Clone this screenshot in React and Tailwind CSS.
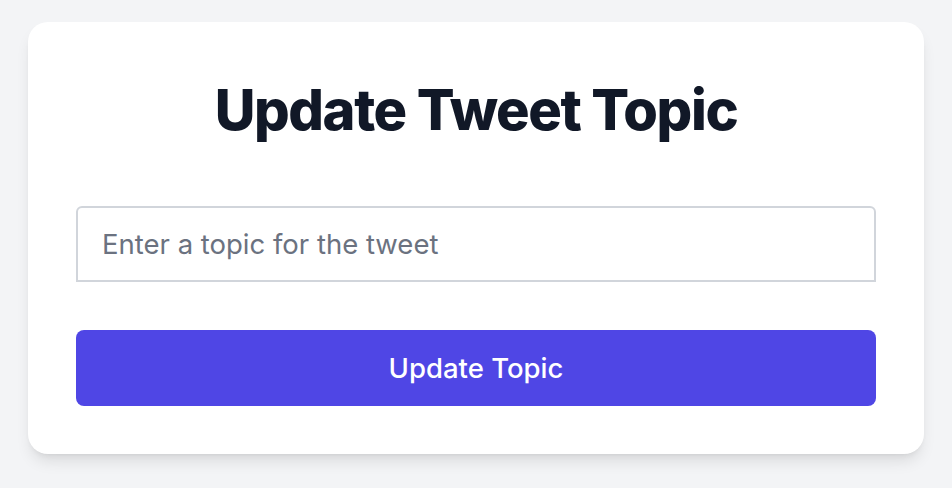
import React from "react";

export default function App() {
  return (
    <div
      className="min-h-screen bg-[#f3f4f6] pt-[22px] px-4"
      style={{ fontFamily: "Inter, 'Noto Sans', sans-serif" }}
    >
      <div className="mx-auto max-w-4xl rounded-[20px] bg-white p-12 shadow-lg">
        <h1 className="mb-[68px] pt-3 text-center text-[56px] leading-none font-extrabold tracking-tight text-[#111827]">
          Update Tweet Topic
        </h1>
        <input
          type="text"
          placeholder="Enter a topic for the tweet"
          className="block w-full rounded-t-md border-2 border-[#d1d5db] px-6 py-[20px] text-[27.5px] leading-8 text-[#111827] placeholder-[#6b7280] outline-none"
        />
        <button className="mt-12 w-full rounded-lg bg-[#4f46e5] py-[22px] text-[27.5px] leading-8 font-medium text-white">
          Update Topic
        </button>
      </div>
    </div>
  );
}
